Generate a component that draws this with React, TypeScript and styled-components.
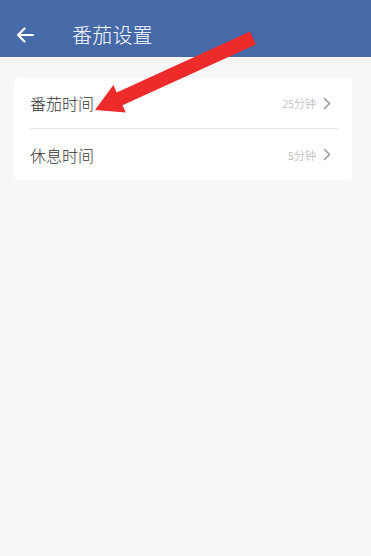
import styled, { createGlobalStyle } from "styled-components";

const GlobalStyle = createGlobalStyle`
  html, body {
    margin: 0;
    padding: 0;
    background: #f7f7f9;
  }
  body {
    font-family: "Noto Sans CJK SC", "Noto Sans", sans-serif;
  }
`;

const rows = [
  { label: "番茄时间", value: "25分钟" },
  { label: "休息时间", value: "5分钟" },
];

const App = () => {
  return (
    <Page>
      <GlobalStyle />
      <Header>
        <Back>
          <svg width="18" height="16" viewBox="0 0 18 16" fill="none">
            <path
              d="M17 8H2M8.5 1.5L2 8l6.5 6.5"
              stroke="#fff"
              strokeWidth="2.2"
              strokeLinecap="round"
              strokeLinejoin="round"
            />
          </svg>
        </Back>
        <Title>番茄设置</Title>
      </Header>
      <Body>
        <Card>
          {rows.map((r, i) => (
            <Row key={r.label} last={i === rows.length - 1}>
              <Label>{r.label}</Label>
              <Value>{r.value}</Value>
              <Chevron>
                <svg width="8" height="13" viewBox="0 0 8 13" fill="none">
                  <path
                    d="M1.5 1.5L6.5 6.5L1.5 11.5"
                    stroke="#9a9a9a"
                    strokeWidth="1.6"
                    strokeLinecap="round"
                    strokeLinejoin="round"
                  />
                </svg>
              </Chevron>
            </Row>
          ))}
        </Card>
      </Body>
      <Arrow width="371" height="130" viewBox="0 0 371 130">
        <polygon
          points="95,110 113.4,85.1 116.7,92.4 250.1,31.6 255.9,44.4 122.5,105.2 125.8,112.5"
          fill="#ee2b2b"
        />
      </Arrow>
    </Page>
  );
};

export default App;

const Page = styled.div`
  position: relative;
  width: 371px;
  min-height: 556px;
  background: #f7f7f9;
`;

const Header = styled.div`
  height: 57px;
  background: #4669a8;
  display: flex;
  align-items: center;
  padding-top: 12px;
  box-sizing: border-box;
`;

const Back = styled.div`
  width: 18px;
  height: 16px;
  margin-left: 16px;
  display: flex;
`;

const Title = styled.div`
  margin-left: 38px;
  color: #fff;
  font-size: 20px;
  font-weight: 300;
  line-height: 24px;
  letter-spacing: 0.2px;
`;

const Body = styled.div`
  padding: 21px 19px 0 14px;
`;

const Card = styled.div`
  background: #fff;
  border-radius: 5px;
  padding: 0 14px 0 16px;
`;

const Row = styled.div<{ last: boolean }>`
  height: 51px;
  display: flex;
  align-items: center;
  border-bottom: ${({ last }) => (last ? "none" : "1px solid #e8e8e8")};
  box-sizing: border-box;
`;

const Label = styled.div`
  flex: 1;
  font-size: 16px;
  font-weight: 300;
  color: #333;
`;

const Value = styled.div`
  font-size: 11px;
  font-weight: 300;
  color: #aaa;
`;

const Chevron = styled.div`
  margin-left: 7px;
  margin-right: 7px;
  display: flex;
`;

const Arrow = styled.svg`
  position: absolute;
  left: 0;
  top: 0;
  pointer-events: none;
`;
